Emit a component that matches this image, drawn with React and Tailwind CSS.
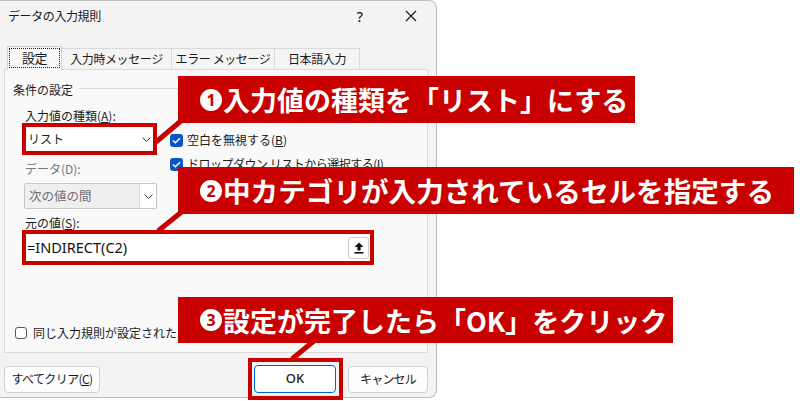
import React from "react";

const ui = "font-['Noto_Sans','Noto_Sans_CJK_JP',sans-serif]";
const jp = "font-['Noto_Sans_CJK_JP',sans-serif]";

function Chevron({ color = "#3a3a3a" }) {
  return (
    <svg width="9" height="5" viewBox="0 0 9 5">
      <polyline points="0.5,0.5 4.5,4.5 8.5,0.5" fill="none" stroke={color} strokeWidth="1" />
    </svg>
  );
}

function Check({ checked }) {
  if (!checked) {
    return <span className="w-[12px] h-[12px] rounded-[3px] border border-[#5a5a5a] bg-white flex-shrink-0" />;
  }
  return (
    <span className="w-[13px] h-[13px] rounded-[3px] bg-[#0a56c2] flex items-center justify-center flex-shrink-0">
      <svg width="9" height="7" viewBox="0 0 9 7">
        <polyline points="1,3.6 3.3,5.8 8,1.2" fill="none" stroke="#fff" strokeWidth="1.4" />
      </svg>
    </span>
  );
}

function Callout({ num, top, width, height = 47, big, children }) {
  return (
    <div
      className={`absolute left-[178px] bg-[#c80000] flex items-center pl-[22px] ${jp} font-bold text-white ${big ? "text-[27.6px]" : "text-[27px]"} leading-none whitespace-nowrap`}
      style={{ top, width, height }}
    >
      <span className="w-[22px] h-[22px] rounded-full bg-white text-[#c80000] text-[16px] font-bold flex items-center justify-center font-['Noto_Sans',sans-serif]">
        {num}
      </span>
      <span className="ml-[1px]">{children}</span>
    </div>
  );
}

export default function App() {
  return (
    <div className={`relative w-[800px] h-[401px] bg-white overflow-hidden ${ui} text-[12px] text-[#1b1b1b]`}>
      {/* ダイアログ */}
      <div className="w-[437px] h-[398px] bg-[#f3f3f3] border-t border-r border-b border-[#bdbdbd] rounded-r-[8px] flex flex-col">
        {/* タイトル */}
        <div className="h-[30px] flex items-center pl-[8px]">
          <span className={`${jp} tracking-[-0.4px]`}>データの入力規則</span>
          <span className="ml-auto text-[14px] font-medium">?</span>
          <svg className="ml-[42px] mr-[19px]" width="12" height="12" viewBox="0 0 12 12">
            <path d="M1 1 L11 11 M11 1 L1 11" stroke="#1b1b1b" strokeWidth="1.2" />
          </svg>
        </div>

        {/* タブ */}
        <div className={`mt-[15px] h-[23px] flex items-end pl-[7px] ${jp} tracking-[-0.4px]`}>
          <div className="relative z-10 -mb-px w-[55px] h-[24px] bg-[#f9f9f9] border-l border-t border-r border-[#d0d0d0] p-[1px] pb-[2px]">
            <div className="w-full h-full border border-dotted border-[#222] flex items-center justify-center text-[13px]">
              設定
            </div>
          </div>
          <div className="w-[110px] h-[21px] bg-[#f4f4f4] border-t border-r border-[#dadada] flex items-center justify-center">
            入力時メッセージ
          </div>
          <div className="w-[103px] h-[21px] bg-[#f4f4f4] border-t border-r border-[#dadada] flex items-center justify-center">
            エラー メッセージ
          </div>
          <div className="w-[85px] h-[21px] bg-[#f4f4f4] border-t border-r border-[#dadada] flex items-center justify-center">
            日本語入力
          </div>
        </div>

        {/* パネル */}
        <div className={`ml-[4px] w-[424px] h-[284px] bg-[#f9f9f9] border border-[#dadada] flex flex-col ${jp}`}>
          <div className="mt-[11px] h-[18px] pl-[8px] pr-[6px] flex items-center">
            <span>条件の設定</span>
            <span className="flex-1 h-px bg-[#dcdcdc] ml-[6px] -mt-[3px]" />
          </div>

          <div className="ml-[17px] flex flex-col">
            <div className="mt-[10px] h-[14px] leading-[14px] pl-[3px]">
              入力値の種類(<span className="underline">A</span>):
            </div>

            <div className="flex">
              <div className="w-[135px] flex flex-col">
                <div className="h-[32px] border-4 border-[#c80000] bg-white flex items-center">
                  <span className="flex-1 pl-[2px]">リスト</span>
                  <span className="w-[13px] h-full flex items-center justify-center">
                    <Chevron />
                  </span>
                </div>
                <div className="mt-[7px] h-[14px] leading-[14px] pl-[3px] text-[#767676]">データ(D):</div>
                <div className="mt-[7px] ml-[2px] w-[133px] h-[26px] border border-[#c6c6c6] rounded-[2px] flex overflow-hidden">
                  <span className="flex-1 bg-[#efefef] pl-[4px] flex items-center text-[#6f6f6f] text-[12.5px]">次の値の間</span>
                  <span className="w-[17px] bg-white border-l border-[#d6d6d6] flex items-center justify-center">
                    <Chevron />
                  </span>
                </div>
              </div>

              <div className="ml-[13px] pt-[5px] flex flex-col">
                <div className="h-[24px] flex items-center gap-[4px]">
                  <Check checked />
                  <span>空白を無視する(<span className="underline">B</span>)</span>
                </div>
                <div className="h-[24px] flex items-center gap-[4px]">
                  <Check checked />
                  <span className="tracking-[-0.5px]">ドロップダウン リストから選択する(<span className="underline">I</span>)</span>
                </div>
              </div>
            </div>

            <div className="mt-[6px] h-[15px] leading-[15px] pl-[3px]">
              元の値(<span className="underline">S</span>):
            </div>
            <div className="w-[352px] h-[35px] border-4 border-[#c80000] bg-white flex items-center">
              <span className="flex-1 pl-[1px] text-[14.5px] font-['Noto_Sans',sans-serif] text-[#111]">=INDIRECT(C2)</span>
              <span className="mr-[1px] w-[21px] h-[22px] bg-white border border-[#c9c9c9] rounded-[3px] flex items-center justify-center">
                <svg width="10" height="12" viewBox="0 0 10 12">
                  <path d="M5 0.5 L9.5 5 L6.6 5 L6.6 8.5 L3.4 8.5 L3.4 5 L0.5 5 Z" fill="#111" />
                  <rect x="0.5" y="10" width="9" height="1.6" fill="#111" />
                </svg>
              </span>
            </div>
          </div>

          <div className="mt-[60px] h-[16px] pl-[10px] flex items-center gap-[6px] whitespace-nowrap">
            <Check />
            <span>同じ入力規則が設定されたすべてのセルに変更を適用する(P)</span>
          </div>
        </div>

        {/* ボタン */}
        <div className={`mt-[12px] h-[28px] flex items-center ${jp}`}>
          <button className="ml-[4px] w-[96px] h-[27px] bg-[#fdfdfd] border border-[#d0d0d0] rounded-[4px] tracking-[-0.6px]">
            すべてクリア(<span className="underline">C</span>)
          </button>
          <div className="ml-[148px] w-[95px] h-[42px] border-4 border-[#c80000] bg-[#f3f3f3] flex items-center pl-[2px]">
            <button className="w-[82px] h-[28px] bg-white border-[1.5px] border-[#0067c0] rounded-[4px] text-[13px] font-['Noto_Sans',sans-serif] font-medium">
              OK
            </button>
          </div>
          <button className="ml-[5px] w-[80px] h-[27px] bg-[#fdfdfd] border border-[#d0d0d0] rounded-[4px] tracking-[-0.8px]">
            キャンセル
          </button>
        </div>
      </div>

      {/* 引き出し線 */}
      <svg className="absolute inset-0 pointer-events-none" width="800" height="401">
        <line x1="188" y1="115" x2="156" y2="142" stroke="#c80000" strokeWidth="5" />
        <line x1="189" y1="206" x2="158" y2="231" stroke="#c80000" strokeWidth="5" />
        <line x1="320" y1="336" x2="292" y2="359" stroke="#c80000" strokeWidth="5" />
      </svg>

      <Callout num="1" top={76} width={457}>入力値の種類を「リスト」にする</Callout>
      <Callout num="2" top={167} width={616} big>中カテゴリが入力されているセルを指定する</Callout>
      <Callout num="3" top={297} width={495} height={46}>設定が完了したら「OK」をクリック</Callout>
    </div>
  );
}
